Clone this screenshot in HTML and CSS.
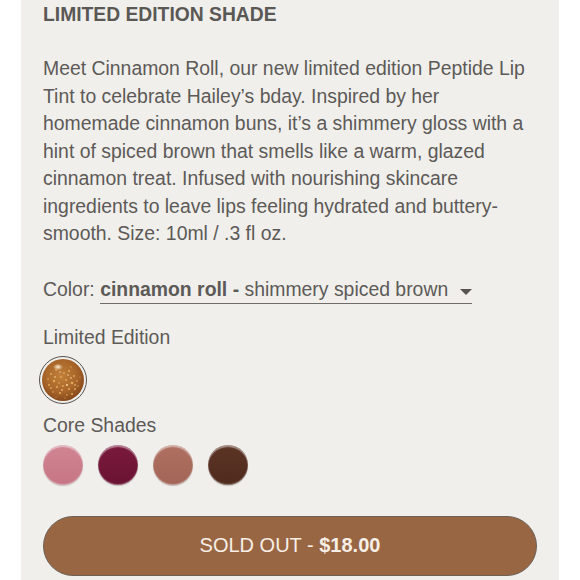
FILE: index.html
```html
<!DOCTYPE html>
<html>
<head>
<meta charset="utf-8">
<link rel="stylesheet" href="styles.css">
</head>
<body>
<div class="panel">
  <h2 class="title">LIMITED EDITION SHADE</h2>
  <p class="desc">Meet Cinnamon Roll, our new limited edition Peptide Lip Tint to celebrate Hailey’s bday. Inspired by her homemade cinnamon buns, it’s a shimmery gloss with a hint of spiced brown that smells like a warm, glazed cinnamon treat. Infused with nourishing skincare ingredients to leave lips feeling hydrated and buttery-smooth. Size: 10ml / .3 fl oz.</p>
  <div class="color-row">Color: <span class="select"><b>cinnamon roll -</b> shimmery spiced brown<svg class="caret" width="12" height="6" viewBox="0 0 12 6"><path d="M0 0H12L6 6Z" fill="#565350"/></svg></span></div>
  <div class="group-label">Limited Edition</div>
  <div class="swatches limited">
    <span class="swatch glitter">
      <svg width="42" height="42" viewBox="0 0 42 42">
        <defs>
          <radialGradient id="g" cx="45%" cy="40%" r="60%">
            <stop offset="0" stop-color="#c0803a"/>
            <stop offset="0.65" stop-color="#a8652a"/>
            <stop offset="1" stop-color="#86491c"/>
          </radialGradient>
          <radialGradient id="h" cx="50%" cy="50%" r="50%">
            <stop offset="0" stop-color="#fff6e2" stop-opacity="0.95"/>
            <stop offset="1" stop-color="#fff6e2" stop-opacity="0"/>
          </radialGradient>
        </defs>
        <circle cx="21" cy="21" r="21" fill="url(#g)"/>
        <g fill="#e2aa58">
          <circle cx="9" cy="15" r="1"/><circle cx="14" cy="11" r="0.9"/><circle cx="27" cy="12" r="1.1"/>
          <circle cx="32" cy="17" r="0.9"/><circle cx="12" cy="22" r="1.2"/><circle cx="19" cy="18" r="0.9"/>
          <circle cx="24" cy="21" r="1"/><circle cx="30" cy="24" r="1.3"/><circle cx="35" cy="22" r="0.8"/>
          <circle cx="7" cy="26" r="0.9"/><circle cx="15" cy="28" r="1.1"/><circle cx="21" cy="27" r="0.9"/>
          <circle cx="27" cy="30" r="1"/><circle cx="33" cy="30" r="0.9"/><circle cx="11" cy="33" r="0.8"/>
          <circle cx="18" cy="34" r="1.1"/><circle cx="25" cy="36" r="0.8"/><circle cx="30" cy="35" r="1"/>
          <circle cx="22" cy="14" r="0.9"/><circle cx="17" cy="24" r="0.8"/><circle cx="36" cy="27" r="0.7"/>
          <circle cx="6" cy="20" r="0.8"/><circle cx="38" cy="18" r="0.6"/><circle cx="16" cy="7" r="0.7"/>
          <circle cx="29" cy="8" r="0.7"/><circle cx="23" cy="39" r="0.6"/><circle cx="14" cy="38" r="0.6"/>
        </g>
        <g fill="#ffe0a0">
          <circle cx="25" cy="26" r="0.9"/><circle cx="13" cy="18" r="0.8"/><circle cx="29" cy="19" r="0.8"/>
          <circle cx="20" cy="31" r="0.8"/><circle cx="9" cy="29" r="0.7"/><circle cx="33" cy="26" r="0.7"/>
          <circle cx="18" cy="13" r="0.7"/><circle cx="26" cy="16" r="0.7"/>
        </g>
        <ellipse cx="16" cy="8" rx="5" ry="3.2" fill="url(#h)"/>
      </svg>
    </span>
  </div>
  <div class="group-label">Core Shades</div>
  <div class="swatches core">
    <span class="swatch pink"></span>
    <span class="swatch berry"></span>
    <span class="swatch rose"></span>
    <span class="swatch cocoa"></span>
  </div>
  <button class="buy">SOLD OUT - <b>$18.00</b></button>
</div>
</body>
</html>
```

FILE: styles.css
```css
html, body {
  margin: 0;
  padding: 0;
  background: #ffffff;
}

body {
  font-family: "Liberation Sans", Arial, sans-serif;
  color: #5d5a57;
}

.panel {
  margin-left: 21px;
  width: 538px;
  height: 580px;
  background: #f0efec;
  box-sizing: border-box;
  padding: 3px 22px 0 22px;
  display: flex;
  flex-direction: column;
  align-items: flex-start;
}

.title {
  margin: 0;
  font-size: 19.3px;
  line-height: 24px;
  font-weight: bold;
  color: #5a5855;
}

.desc {
  margin: 28px 0 0 0;
  font-size: 19.4px;
  line-height: 27.5px;
}

.color-row {
  margin-top: 28px;
  font-size: 19.4px;
  line-height: 27.5px;
}

.select {
  display: inline-block;
  line-height: 24px;
  padding-bottom: 2px;
  border-bottom: 1.5px solid #6f6c69;
}

.select b {
  font-weight: bold;
}

.caret {
  margin-left: 12px;
  vertical-align: 1px;
}

.group-label {
  margin-top: 20px;
  font-size: 19.4px;
  line-height: 27.5px;
}

.limited {
  margin-top: 8px;
  margin-left: -1px;
}

.limited + .group-label {
  margin-top: 11px;
}

.swatches {
  display: flex;
  gap: 15px;
}

.core {
  margin-top: 5px;
}

.swatch {
  display: block;
  width: 40px;
  height: 40px;
  border-radius: 50%;
  box-shadow: inset 0 2px 1px rgba(255, 255, 255, 0.45),
              inset 0 -1px 1px rgba(255, 255, 255, 0.35),
              0 1px 1px rgba(0, 0, 0, 0.2);
}

.glitter {
  width: 42px;
  height: 42px;
  outline: 1.5px solid #58534f;
  outline-offset: 2px;
  box-shadow: none;
}

.glitter svg {
  display: block;
}

.pink {
  background: linear-gradient(#d08593, #c67584);
}

.berry {
  background: linear-gradient(#7a1a3d, #6a1232);
}

.rose {
  background: linear-gradient(#af7061, #a36557);
}

.cocoa {
  background: linear-gradient(#5c3425, #4f2b1d);
}

.buy {
  margin-top: 31px;
  width: 494px;
  height: 60px;
  border-radius: 30px;
  border: 1px solid #6c6157;
  background: #996644;
  color: #f7efe6;
  font-family: "Liberation Sans", Arial, sans-serif;
  font-size: 20px;
  padding: 0;
}

.buy b {
  font-weight: bold;
}
```
